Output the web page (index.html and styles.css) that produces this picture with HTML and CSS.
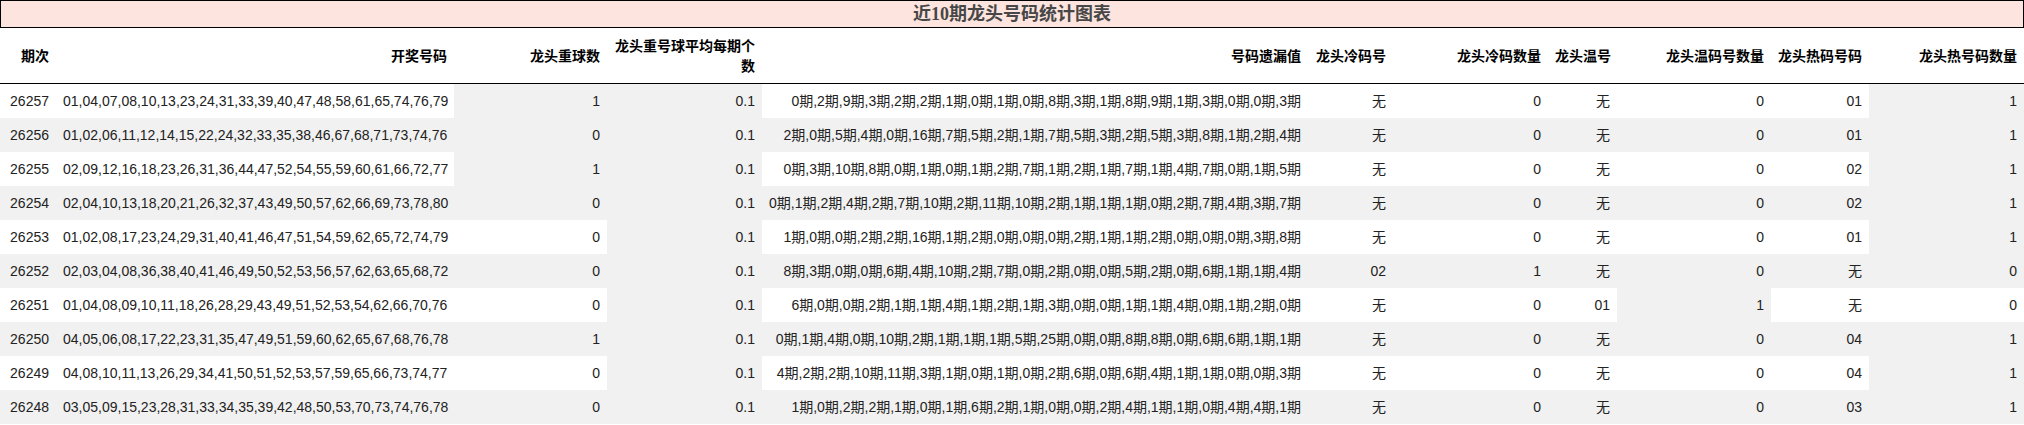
FILE: index.html
```html
<!DOCTYPE html>
<html lang="zh-CN">
<head>
<meta charset="utf-8">
<title>近10期龙头号码统计图表</title>
<link rel="stylesheet" href="styles.css">
</head>
<body>
<div class="title">近10期龙头号码统计图表</div>
<table class="stats">
<colgroup>
<col class="c1"><col class="c2"><col class="c3"><col class="c4"><col class="c5"><col class="c6"><col class="c7"><col class="c8"><col class="c9"><col class="c10"><col class="c11">
</colgroup>
<thead>
<tr>
<th>期次</th><th>开奖号码</th><th>龙头重球数</th><th class="wrap">龙头重号球平均每期个数</th><th>号码遗漏值</th><th>龙头冷码号</th><th>龙头冷码数量</th><th>龙头温号</th><th>龙头温码号数量</th><th>龙头热码号码</th><th>龙头热号码数量</th>
</tr>
</thead>
<tbody>
<tr><td>26257</td><td>01,04,07,08,10,13,23,24,31,33,39,40,47,48,58,61,65,74,76,79</td><td class="hl">1</td><td class="hl">0.1</td><td>0期,2期,9期,3期,2期,2期,1期,0期,1期,0期,8期,3期,1期,8期,9期,1期,3期,0期,0期,3期</td><td>无</td><td>0</td><td>无</td><td>0</td><td>01</td><td class="hl">1</td></tr>
<tr><td>26256</td><td>01,02,06,11,12,14,15,22,24,32,33,35,38,46,67,68,71,73,74,76</td><td>0</td><td class="hl">0.1</td><td>2期,0期,5期,4期,0期,16期,7期,5期,2期,1期,7期,5期,3期,2期,5期,3期,8期,1期,2期,4期</td><td>无</td><td>0</td><td>无</td><td>0</td><td>01</td><td class="hl">1</td></tr>
<tr><td>26255</td><td>02,09,12,16,18,23,26,31,36,44,47,52,54,55,59,60,61,66,72,77</td><td class="hl">1</td><td class="hl">0.1</td><td>0期,3期,10期,8期,0期,1期,0期,1期,2期,7期,1期,2期,1期,7期,1期,4期,7期,0期,1期,5期</td><td>无</td><td>0</td><td>无</td><td>0</td><td>02</td><td class="hl">1</td></tr>
<tr><td>26254</td><td>02,04,10,13,18,20,21,26,32,37,43,49,50,57,62,66,69,73,78,80</td><td>0</td><td class="hl">0.1</td><td>0期,1期,2期,4期,2期,7期,10期,2期,11期,10期,2期,1期,1期,1期,0期,2期,7期,4期,3期,7期</td><td>无</td><td>0</td><td>无</td><td>0</td><td>02</td><td class="hl">1</td></tr>
<tr><td>26253</td><td>01,02,08,17,23,24,29,31,40,41,46,47,51,54,59,62,65,72,74,79</td><td>0</td><td class="hl">0.1</td><td>1期,0期,0期,2期,2期,16期,1期,2期,0期,0期,0期,2期,1期,1期,2期,0期,0期,0期,3期,8期</td><td>无</td><td>0</td><td>无</td><td>0</td><td>01</td><td class="hl">1</td></tr>
<tr><td>26252</td><td>02,03,04,08,36,38,40,41,46,49,50,52,53,56,57,62,63,65,68,72</td><td>0</td><td class="hl">0.1</td><td>8期,3期,0期,0期,6期,4期,10期,2期,7期,0期,2期,0期,0期,5期,2期,0期,6期,1期,1期,4期</td><td>02</td><td class="hl">1</td><td>无</td><td>0</td><td>无</td><td>0</td></tr>
<tr><td>26251</td><td>01,04,08,09,10,11,18,26,28,29,43,49,51,52,53,54,62,66,70,76</td><td>0</td><td class="hl">0.1</td><td>6期,0期,0期,2期,1期,1期,4期,1期,2期,1期,3期,0期,0期,1期,1期,4期,0期,1期,2期,0期</td><td>无</td><td>0</td><td>01</td><td class="hl">1</td><td>无</td><td>0</td></tr>
<tr><td>26250</td><td>04,05,06,08,17,22,23,31,35,47,49,51,59,60,62,65,67,68,76,78</td><td class="hl">1</td><td class="hl">0.1</td><td>0期,1期,4期,0期,10期,2期,1期,1期,1期,5期,25期,0期,0期,8期,8期,0期,6期,6期,1期,1期</td><td>无</td><td>0</td><td>无</td><td>0</td><td>04</td><td class="hl">1</td></tr>
<tr><td>26249</td><td>04,08,10,11,13,26,29,34,41,50,51,52,53,57,59,65,66,73,74,77</td><td>0</td><td class="hl">0.1</td><td>4期,2期,2期,10期,11期,3期,1期,0期,1期,0期,2期,6期,0期,6期,4期,1期,1期,0期,0期,3期</td><td>无</td><td>0</td><td>无</td><td>0</td><td>04</td><td class="hl">1</td></tr>
<tr><td>26248</td><td>03,05,09,15,23,28,31,33,34,35,39,42,48,50,53,70,73,74,76,78</td><td>0</td><td class="hl">0.1</td><td>1期,0期,2期,2期,1期,0期,1期,6期,2期,1期,0期,0期,2期,4期,1期,1期,0期,4期,4期,1期</td><td>无</td><td>0</td><td>无</td><td>0</td><td>03</td><td class="hl">1</td></tr>
</tbody>
</table>
</body>
</html>
```
FILE: styles.css
```css
html, body {
  margin: 0;
  padding: 0;
  background: #ffffff;
}

body {
  width: 2024px;
  font-family: "Liberation Sans", "Noto Sans CJK SC", sans-serif;
  font-size: 14px;
  color: #222222;
}

.title {
  box-sizing: border-box;
  width: 2024px;
  height: 28px;
  border: 1px solid #000000;
  background: #fde4df;
  text-align: center;
  font-family: "Liberation Serif", "Noto Sans CJK SC", serif;
  font-weight: bold;
  font-size: 18px;
  line-height: 26px;
  color: #474747;
}

.stats {
  width: 2024px;
  table-layout: fixed;
  border-collapse: separate;
  border-spacing: 0;
}

.c1 { width: 56px; }
.c2 { width: 398px; }
.c3 { width: 153px; }
.c4 { width: 155px; }
.c5 { width: 546px; }
.c6 { width: 85px; }
.c7 { width: 155px; }
.c8 { width: 69px; }
.c9 { width: 154px; }
.c10 { width: 98px; }
.c11 { width: 155px; }

.stats th {
  text-align: right;
  vertical-align: middle;
  font-weight: bold;
  color: #000000;
  line-height: 20px;
  padding: 8px 7px 7px 7px;
  border-bottom: 1px solid #000000;
  white-space: nowrap;
}

.stats th.wrap {
  white-space: normal;
}

.stats td {
  text-align: right;
  vertical-align: middle;
  line-height: 20px;
  padding: 7px 7px 7px 7px;
  white-space: nowrap;
}

.stats tbody tr:nth-child(even) td {
  background: #f1f1f1;
}

.stats td.hl {
  background: #f1f1f1;
}
```
